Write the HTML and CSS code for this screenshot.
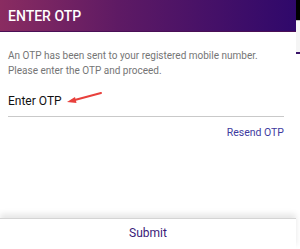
FILE: index.html
```html
<!DOCTYPE html>
<html>
<head>
<meta charset="utf-8">
<link rel="stylesheet" href="styles.css">
</head>
<body>
<div class="screen">
  <div class="dialog">
    <header class="header">ENTER OTP</header>
    <p class="msg">An OTP has been sent to your registered mobile number.<br>Please enter the OTP and proceed.</p>
    <div class="field">
      <span class="label">Enter OTP</span>
      <svg class="arrow" width="40" height="14" viewBox="0 0 40 14">
        <path d="M36 2 L6 10" stroke="#e8403c" stroke-width="2" stroke-linecap="round" fill="none"/>
        <path d="M2 11 L10 6 L11.5 12 Z" fill="#e8403c"/>
      </svg>
    </div>
    <div class="resend-row"><span class="resend">Resend OTP</span></div>
    <div class="spacer"></div>
    <div class="footer"><span class="submit">Submit</span></div>
  </div>
  <div class="side">
    <div class="side-dark"></div>
    <div class="side-light"></div>
    <div class="side-purple"></div>
  </div>
</div>
</body>
</html>
```

FILE: styles.css
```css
* { box-sizing: border-box; }
html, body { margin: 0; padding: 0; background: #fff; }
body { font-family: Roboto, "Noto Sans", sans-serif; }
.screen {
  width: 300px;
  height: 249px;
  display: grid;
  grid-template-columns: 296px 4px;
  overflow: hidden;
}
.dialog {
  display: flex;
  flex-direction: column;
  height: 249px;
  background: #fff;
}
.header {
  height: 32px;
  padding: 9px 0 0 8px;
  color: #fff;
  font-size: 14px;
  font-weight: 500;
  line-height: 14px;
  background: linear-gradient(90deg, #8a2c61 0%, #5e1a64 40%, #2f086b 100%);
  border-bottom: 1px solid #4a0f55;
}
.msg {
  margin: 16px 0 0 8px;
  font-size: 10px;
  line-height: 15px;
  color: #757575;
}
.field {
  margin: 13px 12px 0 8px;
  height: 26px;
  border-bottom: 1px solid #c9c9c9;
  display: flex;
  align-items: flex-start;
}
.label {
  font-size: 12px;
  line-height: 14px;
  color: #111;
  margin-top: 3px;
}
.arrow { margin-left: 3px; margin-top: 0; }
.resend-row {
  display: flex;
  justify-content: flex-end;
  margin: 9px 12px 0 0;
}
.resend {
  font-size: 10.5px;
  line-height: 14px;
  color: #3e3aa0;
}
.spacer { flex: 1; }
.footer {
  height: 31px;
  border-top: 1px solid #d4d4d4;
  box-shadow: 0 -4px 6px rgba(0,0,0,0.10);
  display: flex;
  justify-content: center;
  padding-top: 7px;
  background: #fff;
}
.submit {
  font-size: 12px;
  line-height: 14px;
  color: #3a1a78;
}
.side { display: flex; flex-direction: column; }
.side-dark { height: 20px; background: #000; }
.side-light { height: 32px; background: #f5f5f5; border-top: 1px solid #bdbdbd; }
.side-purple { height: 2px; background: #3a1468; }
```
